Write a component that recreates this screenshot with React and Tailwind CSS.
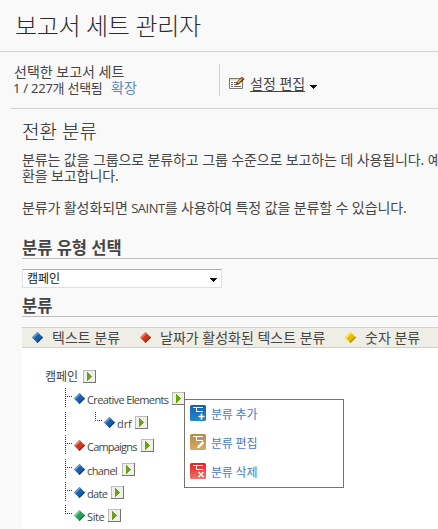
const BLUE = ["#5f97d0", "#1c5fa8", "#0d3f7c"];
const RED = ["#ee7f63", "#cf3a1c", "#962410"];
const YELLOW = ["#f7e35a", "#e3bd05", "#a98a00"];
const GREEN = ["#74cfa0", "#1fa35c", "#0d7a3f"];

function Diamond({ tone }) {
  return (
    <svg className="block h-[11px] w-[11px] shrink-0" viewBox="0 0 11 11">
      <path d="M5.500 0 11 5.500 5.500 11 0 5.500Z" fill={tone[1]} />
      <path d="M5.500 0 0 5.500l1.300 1.300 5.500-5.500Z" fill={tone[0]} />
      <path d="M11 5.500 5.500 11 4.600 10.100l5.500-5.500Z" fill={tone[2]} />
    </svg>
  );
}

function PlayButton() {
  return (
    <svg className="block h-[13px] w-[13px] shrink-0" viewBox="0 0 13 13" shapeRendering="crispEdges">
      <rect width="13" height="13" fill="#77756f" />
      <rect width="12" height="12" fill="#bdbbb6" />
      <rect x="1" y="1" width="11" height="11" fill="#f0efeb" />
      <path d="M4 2h1v1h1v1h1v1h1v1h1v1H8v1H7v1H6v1H5v1H4Z" fill="#6aa30c" />
    </svg>
  );
}

function CaretDown() {
  return (
    <svg className="block h-[4px] w-[7px]" viewBox="0 0 7 4" shapeRendering="crispEdges">
      <path d="M0 0h7v1H6v1H5v1H4v1H3V3H2V2H1V1H0Z" fill="#111" />
    </svg>
  );
}

function EditIcon() {
  return (
    <svg className="block h-[14px] w-[16px]" viewBox="0 0 16 14">
      <path d="M.5 2.5h13v10H.5Z" fill="#fff" stroke="#77776b" />
      <path d="M1 3h12v1.5H1Z" fill="#d3dfc2" />
      <path d="M2 6.5h2M5 6.5h3M2 8.5h2M5 8.5h3M2 10.5h2M5 10.5h7" stroke="#666" />
      <path d="m7 9 .8-3L13 .7 15.5 3 10 8.2Z" fill="#4b2418" />
      <path d="m8.8 6.8 4-4" stroke="#f3b23c" strokeWidth="1.7" />
      <path d="m12.8 2.7 1.2-1.2" stroke="#d65c55" strokeWidth="1.8" />
    </svg>
  );
}

function Connector({ last }) {
  return (
    <svg className="block h-[19px] w-[9px] shrink-0" viewBox="0 0 9 19" shapeRendering="crispEdges">
      <path d={last ? "M.5 0V9" : "M.5 0V19"} stroke="#333" strokeDasharray="1 1" />
      <path d="M2 8.5H8" stroke="#333" strokeDasharray="1 1" />
    </svg>
  );
}

function TreeRow({ tone, label, last, className, labelClass }) {
  return (
    <div className={"flex h-[19px] items-start " + className}>
      <Connector last={last} />
      <div className="mt-[5px]"><Diamond tone={tone} /></div>
      <span className={"ml-[2px] mt-[4px] shrink-0 font-['Open_Sans','Noto_Sans',sans-serif] text-[11px] leading-[16px] whitespace-nowrap " + labelClass}>{label}</span>
      <div className="mt-[4px]"><PlayButton /></div>
    </div>
  );
}

function MenuIcon({ kind }) {
  const colors = { add: ["#1261ab", "#2687c9"], edit: ["#bd8944", "#d2ab69"], del: ["#d7281f", "#ec746c"] }[kind];
  return (
    <svg className="block h-[16px] w-[16px] shrink-0" viewBox="0 0 16 16">
      <defs>
        <linearGradient id={kind} x1="0" y1="0" x2="0" y2="1">
          <stop offset="0" stopColor={colors[0]} />
          <stop offset="1" stopColor={colors[1]} />
        </linearGradient>
      </defs>
      <rect width="16" height="16" rx="1.5" fill={"url(#" + kind + ")"} />
      <path d="M3 2.500h10M6.500 3v3.500H13" fill="none" stroke="#fff" />
      {kind === "add" && <path d="M11.500 8.500v6M8.500 11.500h6" stroke="#fff" strokeWidth="1.600" />}
      {kind === "edit" && <path d="m7 14.500.7-2.500 4.800-4.800 1.800 1.800-4.800 4.800Z" fill="#fff" />}
      {kind === "del" && <path d="m8.500 9 5 5M13.500 9l-5 5" stroke="#fff" strokeWidth="1.500" />}
    </svg>
  );
}

function MenuItem({ kind, label }) {
  return (
    <div className="flex h-[16px] items-center gap-[5px]">
      <MenuIcon kind={kind} />
      <span className="mt-[3px] text-[12px] leading-[16px] tracking-[-0.2px] whitespace-nowrap text-[#4a7ac4]">{label}</span>
    </div>
  );
}

export default function App() {
  return (
    <div className="h-[529px] w-[438px] overflow-hidden bg-[#f9f9f9] font-['Noto_Sans','Noto_Sans_CJK_KR',sans-serif] text-[14px] text-[#454545]">
      <header className="flex h-[52px] items-center border-b border-[#d2d2d2] pl-[15px]">
        <h1 className="text-[24px] leading-[32px] font-light tracking-[-0.35px] whitespace-nowrap text-[#2c2c2c]">보고서 세트 관리자</h1>
      </header>
      <div className="ml-[10px] flex h-[57px] items-start border-b border-[#d2d2d2] pl-[4px]">
        <div className="mt-[12px] w-[205px] leading-[16px] whitespace-nowrap">
          <div>선택한 보고서 세트</div>
          <div className="-ml-px flex"><span className="w-[98px] text-[13px] tracking-[-0.25px]">1 / 227개 선택됨</span><span className="text-[#5d86cb]">확장</span></div>
        </div>
        <div className="mt-[12px] flex h-[32px] items-start border-l border-[#d2d2d2] pl-[9px]">
          <div className="mt-[12px]"><EditIcon /></div>
          <span className="ml-[5px] mt-[12px] h-[16px] border-b border-[#454545] leading-[16px] whitespace-nowrap">설정 편집</span>
          <div className="ml-[5px] mt-[21px]"><CaretDown /></div>
        </div>
      </div>
      <main className="ml-[22px]">
        <h2 className="pt-[11px] text-[19px] leading-[24px] font-light text-[#222]">전환 분류</h2>
        <div className="mt-[8px] leading-[16px] tracking-[-0.11px] whitespace-nowrap">
          <p>분류는 값을 그룹으로 분류하고 그룹 수준으로 보고하는 데 사용됩니다. 예</p>
          <p>환을 보고합니다.</p>
          <p className="mt-[16px]">분류가 활성화되면 <span className="font-['Open_Sans','Noto_Sans',sans-serif] text-[13px] tracking-[-0.5px]">SAINT</span>를 사용하여 특정 값을 분류할 수 있습니다.</p>
        </div>
        <h3 className="mt-[22px] h-[21px] border-b border-[#bdbdbd] text-[16.5px] leading-[20px] font-bold">분류 유형 선택</h3>
        <div className="mt-[10px] flex h-[19px] w-[200px] items-center justify-between border border-[#dfe0e6] border-t-[#aaaaaf] bg-white pr-[4px] pl-[4px]">
          <span className="text-[12px] leading-[16px] text-[#222]">캠페인</span>
          <div className="mt-[3px]"><CaretDown /></div>
        </div>
        <h3 className="mt-[8px] h-[21px] border-b border-[#bdbdbd] text-[16.5px] leading-[20px] font-bold">분류</h3>
        <div className="mt-[10px] flex h-[21px] items-center border-y border-[#d0d0cc] bg-[#eeeee6] pl-[10px] whitespace-nowrap">
          <Diamond tone={BLUE} />
          <span className="ml-[9px] w-[88px] leading-[16px]">텍스트 분류</span>
          <Diamond tone={RED} />
          <span className="ml-[9px] w-[185px] leading-[16px]">날짜가 활성화된 텍스트 분류</span>
          <Diamond tone={YELLOW} />
          <span className="ml-[9px] leading-[16px]">숫자 분류</span>
        </div>
        <section className="relative h-[181px] bg-white pt-[20px] pl-[23px]">
          <div className="flex h-[20px] items-start">
            <span className="w-[38px] text-[12px] leading-[18px] whitespace-nowrap">캠페인</span>
            <div className="mt-[2px]"><PlayButton /></div>
          </div>
          <div className="pl-[20px]">
            <TreeRow tone={BLUE} label="Creative Elements" labelClass="w-[85px] tracking-[-0.64px]" className="" />
            <div className="mt-[5px] flex h-[19px]">
              <svg className="block h-[19px] w-[30px]" viewBox="0 0 30 19" shapeRendering="crispEdges">
                <path d="M.5 0V19" stroke="#333" strokeDasharray="1 1" />
              </svg>
              <TreeRow tone={BLUE} label="drf" last labelClass="w-[18px] tracking-[-0.1px]" className="" />
            </div>
            <TreeRow tone={RED} label="Campaigns" labelClass="w-[54px] tracking-[-0.8px]" className="mt-[4px]" />
            <TreeRow tone={BLUE} label="chanel" labelClass="w-[35px] tracking-[-0.6px]" className="mt-[5px]" />
            <TreeRow tone={BLUE} label="date" labelClass="w-[24px] tracking-[-0.7px]" className="mt-[4px]" />
            <TreeRow tone={GREEN} label="Site" last labelClass="w-[21px] tracking-[-0.4px]" className="mt-[4px]" />
          </div>
          <div className="absolute top-[51px] left-[162px] flex h-[89px] w-[160px] flex-col gap-[13px] border border-[#76746c] bg-white pt-[5px] pl-[5px]">
            <MenuItem kind="add" label="분류 추가" />
            <MenuItem kind="edit" label="분류 편집" />
            <MenuItem kind="del" label="분류 삭제" />
          </div>
        </section>
      </main>
    </div>
  );
}
